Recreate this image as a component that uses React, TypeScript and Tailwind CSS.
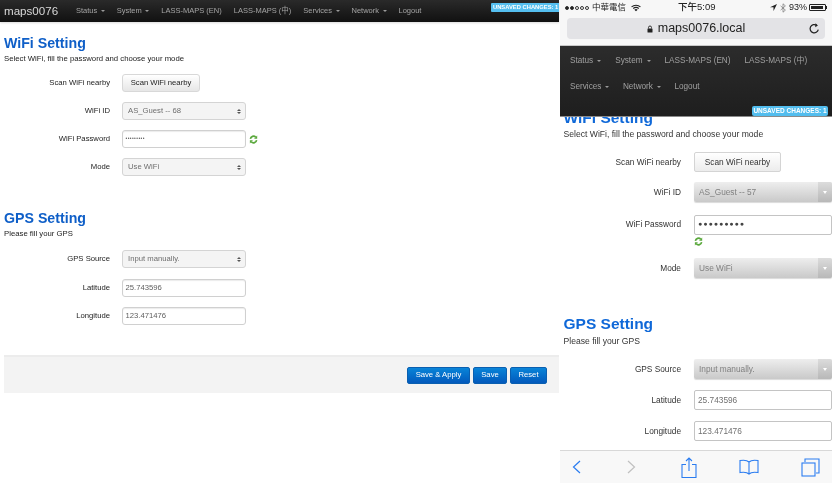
const FONT = "[font-family:'Liberation_Sans','Noto_Sans_CJK_TC',sans-serif]";

function Caret() {
  return <span className="ml-[3.500px] inline-block align-middle w-0 h-0 border-l-[2px] border-r-[2px] border-t-[2px] border-l-transparent border-r-transparent border-t-[#9a9a9a]" />;
}

function BigCaret() {
  return <span className="ml-[4px] inline-block align-middle w-0 h-0 border-l-[2.500px] border-r-[2.500px] border-t-[2.500px] border-l-transparent border-r-transparent border-t-[#9a9a9a]" />;
}

function GreenRefresh() {
  return (
    <svg width="9" height="9" viewBox="0 0 16 16" fill="none" stroke="#5aa83c" strokeWidth="3">
      <path d="M2.5 7a5.5 5.5 0 0 1 9.5-3" />
      <path d="M13.5 9a5.5 5.5 0 0 1-9.5 3" />
      <path d="M14.5 1v5.5H9z" fill="#5aa83c" stroke="none" />
      <path d="M1.5 15V9.500H7z" fill="#5aa83c" stroke="none" />
    </svg>
  );
}

function LeftRow({ label, children }: { label: string; children: React.ReactNode }) {
  return (
    <div className="flex items-center h-[18px]">
      <div className="w-[110px] text-right text-[7.700px] text-[#222]">{label}</div>
      <div className="ml-[12px] flex items-center">{children}</div>
    </div>
  );
}

function LeftSelect({ value }: { value: string }) {
  return (
    <div className="w-[124px] h-[18px] flex items-center justify-between pl-[5px] pr-[4px] rounded-[3px] border border-[#d4d4d4] bg-[#f4f4f4] text-[7.700px] text-[#6e6e6e]">
      <span>{value}</span>
      <span className="flex flex-col gap-[1px]">
        <span className="w-0 h-0 border-l-[2px] border-r-[2px] border-b-[2.500px] border-l-transparent border-r-transparent border-b-[#555]" />
        <span className="w-0 h-0 border-l-[2px] border-r-[2px] border-t-[2.500px] border-l-transparent border-r-transparent border-t-[#555]" />
      </span>
    </div>
  );
}

function LeftInput({ value, dots }: { value: string; dots?: boolean }) {
  return (
    <div className={`w-[124px] h-[18px] flex items-center pl-[2.500px] rounded-[3px] border border-[#d0d0d0] bg-white shadow-[inset_0_1px_1px_rgba(0,0,0,0.08)] text-[#5e5e5e] ${dots ? "text-[5px] tracking-[0.400px]" : "text-[7.700px]"}`}>
      {value}
    </div>
  );
}

function LeftPanel() {
  return (
    <div className="w-[559px] h-full shrink-0 bg-white flex flex-col">
      <div className="h-[22px] bg-gradient-to-b from-[#2a2a2a] to-[#111] flex items-center pl-[4px] shadow-[0_1px_2px_rgba(0,0,0,0.15)]">
        <span className="w-[72px] text-[11.600px] text-[#d8d8d8]">maps0076</span>
        <div className="flex gap-[12px] text-[7.500px] text-[#a4a4a4] whitespace-nowrap">
          <span>Status<Caret /></span>
          <span>System<Caret /></span>
          <span>LASS-MAPS (EN)</span>
          <span>LASS-MAPS (中)</span>
          <span>Services<Caret /></span>
          <span>Network<Caret /></span>
          <span>Logout</span>
        </div>
        <span className="ml-auto -mt-[7px] h-[9px] w-[68px] rounded-l-[1px] bg-[#55bff0] text-white font-bold text-[5.800px] leading-[9px] pl-[2px] whitespace-nowrap overflow-hidden">UNSAVED CHANGES: 1</span>
      </div>

      <div className="pl-[4px] pt-[13px]">
        <h2 className="text-[14.200px] leading-[17px] font-bold text-[#0f5fc8]">WiFi Setting</h2>
        <p className="text-[7.750px] leading-[10px] mt-[2px] text-[#222]">Select WiFi, fill the password and choose your mode</p>
      </div>
      <div className="mt-[10px] flex flex-col gap-[10px]">
        <LeftRow label="Scan WiFi nearby">
          <div className="w-[78px] h-[18px] flex items-center justify-center rounded-[3px] border border-[#d8d8d8] bg-gradient-to-b from-white to-[#e6e6e6] text-[7.700px] text-[#222]">Scan WiFi nearby</div>
        </LeftRow>
        <LeftRow label="WiFi ID"><LeftSelect value="AS_Guest -- 68" /></LeftRow>
        <LeftRow label="WiFi Password">
          <LeftInput value="•••••••••" dots />
          <span className="ml-[2.500px] flex"><GreenRefresh /></span>
        </LeftRow>
        <LeftRow label="Mode"><LeftSelect value="Use WiFi" /></LeftRow>
      </div>

      <div className="pl-[4px] pt-[34px]">
        <h2 className="text-[14.200px] leading-[17px] font-bold text-[#0f5fc8]">GPS Setting</h2>
        <p className="text-[7.750px] leading-[10px] mt-[2px] text-[#222]">Please fill your GPS</p>
      </div>
      <div className="mt-[11px] flex flex-col gap-[10.500px]">
        <LeftRow label="GPS Source"><LeftSelect value="Input manually." /></LeftRow>
        <LeftRow label="Latitude"><LeftInput value="25.743596" /></LeftRow>
        <LeftRow label="Longitude"><LeftInput value="123.471476" /></LeftRow>
      </div>

      <div className="ml-[4px] mt-[30px] h-[38px] bg-[#f3f3f3] border-t-2 border-[#ececec] flex items-center justify-end gap-[3px] pr-[12px]">
        {[["Save & Apply", "w-[63px]"], ["Save", "w-[34px]"], ["Reset", "w-[37px]"]].map(([t, w]) => (
          <div key={t} className={`${w} h-[17px] rounded-[2px] bg-gradient-to-b from-[#0a84d8] to-[#0459bc] border border-[#0a5fb0] text-white text-[7.700px] flex items-center justify-center`}>{t}</div>
        ))}
      </div>
    </div>
  );
}

function RightRow({ label, children }: { label: string; children: React.ReactNode }) {
  return (
    <div className="flex items-center h-[20px]">
      <div className="w-[121px] text-right text-[8.300px] text-[#333] shrink-0">{label}</div>
      <div className="ml-[13px] flex-1">{children}</div>
    </div>
  );
}

function RightSelect({ value }: { value: string }) {
  return (
    <div className="h-[20px] flex items-center rounded-[2px] bg-gradient-to-b from-[#eeeeee] to-[#c9c9c9] shadow-[0_1px_1px_rgba(0,0,0,0.15)] text-[8.300px] text-[#808080]">
      <span className="pl-[5px] flex-1">{value}</span>
      <span className="w-[14px] h-full flex items-center justify-center bg-gradient-to-b from-[#dcdcdc] to-[#b8b8b8] rounded-r-[2px]">
        <span className="w-0 h-0 border-l-[2.500px] border-r-[2.500px] border-t-[3px] border-l-transparent border-r-transparent border-t-white" />
      </span>
    </div>
  );
}

function RightInput({ value, dark }: { value: string; dark?: boolean }) {
  return (
    <div className={`h-[20px] flex items-center pl-[3px] rounded-[2px] border border-[#c4c4c4] bg-white ${dark ? "text-[#444] text-[7px] tracking-[1px]" : "text-[#707070] text-[8.300px]"}`}>{value}</div>
  );
}

function StatusBar() {
  return (
    <div className="h-[15px] flex items-center px-[5px] text-[8.500px] text-[#222] relative">
      <span className="flex items-center gap-[1px]">
        {[1, 1, 0, 0, 0].map((f, i) => (
          <span key={i} className={`w-[4px] h-[4px] rounded-full border border-[#333] ${f ? "bg-[#222]" : ""}`} />
        ))}
      </span>
      <span className="ml-[3px]">中華電信</span>
      <svg className="ml-[5px]" width="10" height="8" viewBox="0 0 18 14" fill="none" stroke="#222" strokeWidth="2">
        <path d="M1 5a12 12 0 0 1 16 0M4 8a8 8 0 0 1 10 0" />
        <path d="M9 13l-3-3a4.500 4.500 0 0 1 6 0z" fill="#222" stroke="none" />
      </svg>
      <span className="ml-[37px] font-medium text-[9.500px]">下午5:09</span>
      <div className="ml-auto flex items-center">
        <svg width="7" height="7" viewBox="0 0 10 10"><path d="M10 0L0 4.500h5V10z" fill="#222" /></svg>
        <svg className="ml-[3px]" width="6" height="10" viewBox="0 0 10 16" fill="none" stroke="#777" strokeWidth="1.200"><path d="M1 4.500l8 7-4 3.500V1l4 3.500-8 7" /></svg>
        <span className="ml-[3px] text-[9px]">93%</span>
        <span className="ml-[2px] w-[17px] h-[7px] border border-[#222] rounded-[1px] p-[1px] flex">
          <span className="w-[90%] bg-[#222]" />
        </span>
        <span className="w-[1px] h-[3px] bg-[#222]" />
      </div>
    </div>
  );
}

function RightPanel() {
  return (
    <div className="ml-[1px] w-[272px] h-full flex flex-col bg-white overflow-hidden">
      <div className="relative z-10 bg-[#f7f7f7] h-[46px] border-b border-[#c8c8c8]">
        <StatusBar />
        <div className="mx-[7px] mt-[3px] h-[21px] rounded-[4px] bg-[#e3e3e6] flex items-center justify-center relative">
          <svg width="6" height="8" viewBox="0 0 12 16"><path d="M3 7V5a3 3 0 0 1 6 0v2" fill="none" stroke="#222" strokeWidth="1.800" /><rect x="1" y="7" width="10" height="8" rx="1" fill="#222" /></svg>
          <span className="ml-[5px] text-[12.500px] text-[#222]">maps0076.local</span>
          <svg className="absolute right-[5px]" width="11" height="11" viewBox="0 0 16 16" fill="none" stroke="#222" strokeWidth="1.800">
            <path d="M13.500 9.500A6 6 0 1 1 11 3.300" />
            <path d="M9.500 0.500l3.500 3-4 2.500z" fill="#222" stroke="none" />
          </svg>
        </div>
      </div>

      <div className="relative z-10 h-[71px] bg-gradient-to-b from-[#2c2c2c] to-[#1e1e1e] text-[8.200px] text-[#a0a0a0] pl-[10px] border-b border-[#8a8a8a]">
        <div className="flex gap-[14px] pt-[9px] leading-[11px] whitespace-nowrap">
          <span>Status<BigCaret /></span>
          <span>System<BigCaret /></span>
          <span>LASS-MAPS (EN)</span>
          <span>LASS-MAPS (中)</span>
        </div>
        <div className="flex gap-[13.500px] mt-[15px] leading-[11px] whitespace-nowrap">
          <span>Services<BigCaret /></span>
          <span>Network<BigCaret /></span>
          <span>Logout</span>
        </div>
        <span className="absolute right-[4px] bottom-0 w-[76px] h-[10px] rounded-[2px] bg-[#52bdee] text-white font-bold text-[6.500px] leading-[10px] text-center whitespace-nowrap">UNSAVED CHANGES: 1</span>
      </div>

      <div className="flex-1 min-h-0 overflow-hidden">
        <h2 className="pl-[3.500px] -mt-[8px] text-[15.500px] leading-[18px] font-bold text-[#0f68d8]">WiFi Setting</h2>
        <p className="pl-[3.500px] mt-[2px] text-[8.600px] leading-[11px] text-[#333]">Select WiFi, fill the password and choose your mode</p>
        <div className="mt-[12px]">
          <RightRow label="Scan WiFi nearby">
            <div className="w-[87px] h-[20px] flex items-center justify-center rounded-[2px] border border-[#d4d4d4] bg-gradient-to-b from-white to-[#ececec] text-[8.300px] text-[#333]">Scan WiFi nearby</div>
          </RightRow>
        </div>
        <div className="mt-[10px]"><RightRow label="WiFi ID"><RightSelect value="AS_Guest -- 57" /></RightRow></div>
        <div className="mt-[12.500px]"><RightRow label="WiFi Password"><RightInput value="●●●●●●●●●" dark /></RightRow></div>
        <div className="pl-[134px] mt-[2px] h-[9px] flex"><GreenRefresh /></div>
        <div className="mt-[12.500px]"><RightRow label="Mode"><RightSelect value="Use WiFi" /></RightRow></div>
        <h2 className="pl-[3.500px] mt-[37px] text-[15.500px] leading-[18px] font-bold text-[#0f68d8]">GPS Setting</h2>
        <p className="pl-[3.500px] mt-[3px] text-[8.600px] leading-[11px] text-[#333]">Please fill your GPS</p>
        <div className="mt-[12px]"><RightRow label="GPS Source"><RightSelect value="Input manually." /></RightRow></div>
        <div className="mt-[11px]"><RightRow label="Latitude"><RightInput value="25.743596" /></RightRow></div>
        <div className="mt-[11px]"><RightRow label="Longitude"><RightInput value="123.471476" /></RightRow></div>
      </div>

      <div className="h-[33px] shrink-0 bg-[#f8f8f8] border-t border-[#d8d8d8] flex items-center justify-between pl-[12px] pr-[12px]">
        <svg width="9" height="14" viewBox="0 0 9 14" fill="none" stroke="#2a7cf0" strokeWidth="1.200"><path d="M8 1L1.500 7 8 13" /></svg>
        <svg className="ml-[4px]" width="9" height="14" viewBox="0 0 9 14" fill="none" stroke="#c0c0c0" strokeWidth="1.200"><path d="M1 1l6.500 6L1 13" /></svg>
        <svg className="ml-[2px]" width="16" height="21" viewBox="0 0 16 21" fill="none" stroke="#2a7cf0" strokeWidth="1.100">
          <path d="M5 7.500H1v13h14v-13h-4M8 14V1M5 4l3-3 3 3" />
        </svg>
        <svg width="20" height="16" viewBox="0 0 20 16" fill="none" stroke="#2a7cf0" strokeWidth="1.100">
          <path d="M10 3C8 1 4 1 1 1.500v12c3-.5 7-.5 9 1.500 2-2 6-2 9-1.500v-12C16 1 12 1 10 3zM10 3v12" />
        </svg>
        <svg width="19" height="19" viewBox="0 0 19 19" fill="none" stroke="#2a7cf0" strokeWidth="1.100">
          <path d="M4 4V1h14v14h-3" />
          <rect x="1" y="5" width="13" height="13" />
        </svg>
      </div>
    </div>
  );
}

export default function App() {
  return (
    <div className={`w-[832px] h-[483px] flex overflow-hidden bg-white blur-[0.35px] ${FONT}`}>
      <LeftPanel />
      <RightPanel />
    </div>
  );
}
